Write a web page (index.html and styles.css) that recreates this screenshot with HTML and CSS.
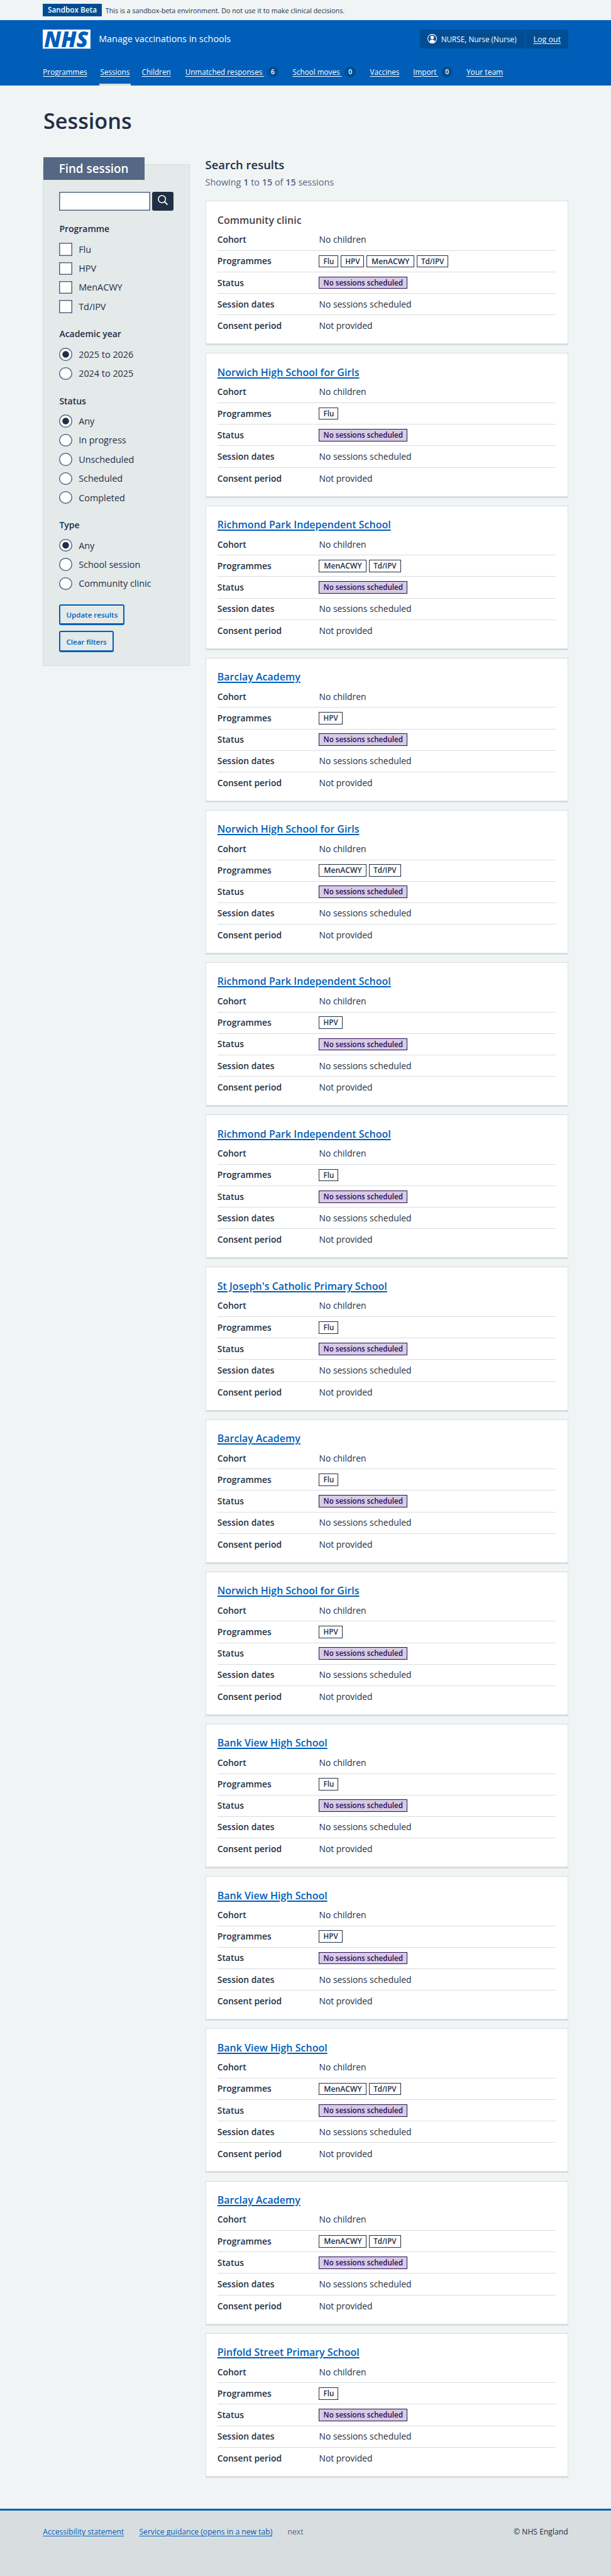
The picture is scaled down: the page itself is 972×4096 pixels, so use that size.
FILE: index.html
```html
<!DOCTYPE html>
<html lang="en">
<head>
<meta charset="utf-8">
<title>Sessions - Manage vaccinations in schools</title>
<link rel="stylesheet" href="styles.css">
</head>
<body>
<div class="banner wrap"><strong class="banner-tag">Sandbox Beta</strong><span class="banner-text">This is a sandbox-beta environment. Do not use it to make clinical decisions.</span></div>
<header class="header">
  <div class="wrap">
    <div class="header-row">
      <svg class="logo" viewBox="0 0 100 40" role="img" aria-label="NHS"><rect width="100" height="40" fill="#fff"/><text x="3" y="36.5" textLength="92" lengthAdjust="spacingAndGlyphs">NHS</text></svg>
      <span class="service">Manage vaccinations in schools</span>
      <div class="account">
        <span class="account-item"><svg class="user" viewBox="0 0 20 20"><circle cx="10" cy="10" r="9.2" fill="none" stroke="#fff" stroke-width="1.4"/><circle cx="10" cy="7.4" r="3.7" fill="#fff"/><path d="M4.8 17.6V15.2a3 3 0 0 1 3-3h4.4a3 3 0 0 1 3 3v2.4A9.3 9.3 0 0 1 10 19.4a9.3 9.3 0 0 1-5.200-1.800z" fill="#fff"/></svg>NURSE, Nurse (Nurse)</span>
        <span class="account-item logout"><a href="#">Log out</a></span>
      </div>
    </div>
    <nav class="nav">
      <span><a href="#">Programmes</a></span>
      <span><a href="#" class="current">Sessions</a></span>
      <span><a href="#">Children</a></span>
      <span><a href="#">Unmatched responses&nbsp;</a><b class="count">6</b></span>
      <span><a href="#">School moves&nbsp;</a><b class="count">0</b></span>
      <span><a href="#">Vaccines</a></span>
      <span><a href="#">Import&nbsp;</a><b class="count">0</b></span>
      <span><a href="#" class="team">Your team</a></span>
    </nav>
  </div>
</header>
<main class="main wrap">
  <h1>Sessions</h1>
  <div class="columns">
    <aside class="filters">
      <h2 class="filters-title">Find session</h2>
      <div class="search"><input type="text" aria-label="Search"><button class="search-button" aria-label="Search"><svg viewBox="0 0 20 20"><circle cx="8.400" cy="8.400" r="7.200" fill="none" stroke="#fff" stroke-width="2"/><path d="M13.600 13.600L18.700 18.700" stroke="#fff" stroke-width="2.500" stroke-linecap="round"/></svg></button></div>
      <h3>Programme</h3>
      <label><i class="box"></i>Flu</label>
      <label><i class="box"></i>HPV</label>
      <label><i class="box"></i>MenACWY</label>
      <label><i class="box"></i>Td/IPV</label>
      <h3>Academic year</h3>
      <label><i class="radio on"></i>2025 to 2026</label>
      <label><i class="radio"></i>2024 to 2025</label>
      <h3>Status</h3>
      <label><i class="radio on"></i>Any</label>
      <label><i class="radio"></i>In progress</label>
      <label><i class="radio"></i>Unscheduled</label>
      <label><i class="radio"></i>Scheduled</label>
      <label><i class="radio"></i>Completed</label>
      <h3>Type</h3>
      <label><i class="radio on"></i>Any</label>
      <label><i class="radio"></i>School session</label>
      <label><i class="radio"></i>Community clinic</label>
      <div class="actions"><button>Update results</button><button>Clear filters</button></div>
    </aside>
    <section class="results">
      <h2>Search results</h2>
      <p class="showing">Showing <b>1</b> to <b>15</b> of <b>15</b> sessions</p>
      <article class="card"><h3>Community clinic</h3><dl>
        <div><dt>Cohort</dt><dd>No children</dd></div>
        <div><dt>Programmes</dt><dd class="tags"><b>Flu</b><b>HPV</b><b class="wide">MenACWY</b><b>Td/IPV</b></dd></div>
        <div><dt>Status</dt><dd class="tags"><b class="status">No sessions scheduled</b></dd></div>
        <div><dt>Session dates</dt><dd>No sessions scheduled</dd></div>
        <div><dt>Consent period</dt><dd>Not provided</dd></div></dl></article>
      <article class="card"><h3><a href="#">Norwich High School for Girls</a></h3><dl>
        <div><dt>Cohort</dt><dd>No children</dd></div>
        <div><dt>Programmes</dt><dd class="tags"><b>Flu</b></dd></div>
        <div><dt>Status</dt><dd class="tags"><b class="status">No sessions scheduled</b></dd></div>
        <div><dt>Session dates</dt><dd>No sessions scheduled</dd></div>
        <div><dt>Consent period</dt><dd>Not provided</dd></div></dl></article>
      <article class="card"><h3><a href="#">Richmond Park Independent School</a></h3><dl>
        <div><dt>Cohort</dt><dd>No children</dd></div>
        <div><dt>Programmes</dt><dd class="tags"><b class="wide">MenACWY</b><b>Td/IPV</b></dd></div>
        <div><dt>Status</dt><dd class="tags"><b class="status">No sessions scheduled</b></dd></div>
        <div><dt>Session dates</dt><dd>No sessions scheduled</dd></div>
        <div><dt>Consent period</dt><dd>Not provided</dd></div></dl></article>
      <article class="card"><h3><a href="#">Barclay Academy</a></h3><dl>
        <div><dt>Cohort</dt><dd>No children</dd></div>
        <div><dt>Programmes</dt><dd class="tags"><b>HPV</b></dd></div>
        <div><dt>Status</dt><dd class="tags"><b class="status">No sessions scheduled</b></dd></div>
        <div><dt>Session dates</dt><dd>No sessions scheduled</dd></div>
        <div><dt>Consent period</dt><dd>Not provided</dd></div></dl></article>
      <article class="card"><h3><a href="#">Norwich High School for Girls</a></h3><dl>
        <div><dt>Cohort</dt><dd>No children</dd></div>
        <div><dt>Programmes</dt><dd class="tags"><b class="wide">MenACWY</b><b>Td/IPV</b></dd></div>
        <div><dt>Status</dt><dd class="tags"><b class="status">No sessions scheduled</b></dd></div>
        <div><dt>Session dates</dt><dd>No sessions scheduled</dd></div>
        <div><dt>Consent period</dt><dd>Not provided</dd></div></dl></article>
      <article class="card"><h3><a href="#">Richmond Park Independent School</a></h3><dl>
        <div><dt>Cohort</dt><dd>No children</dd></div>
        <div><dt>Programmes</dt><dd class="tags"><b>HPV</b></dd></div>
        <div><dt>Status</dt><dd class="tags"><b class="status">No sessions scheduled</b></dd></div>
        <div><dt>Session dates</dt><dd>No sessions scheduled</dd></div>
        <div><dt>Consent period</dt><dd>Not provided</dd></div></dl></article>
      <article class="card"><h3><a href="#">Richmond Park Independent School</a></h3><dl>
        <div><dt>Cohort</dt><dd>No children</dd></div>
        <div><dt>Programmes</dt><dd class="tags"><b>Flu</b></dd></div>
        <div><dt>Status</dt><dd class="tags"><b class="status">No sessions scheduled</b></dd></div>
        <div><dt>Session dates</dt><dd>No sessions scheduled</dd></div>
        <div><dt>Consent period</dt><dd>Not provided</dd></div></dl></article>
      <article class="card"><h3><a href="#">St Joseph's Catholic Primary School</a></h3><dl>
        <div><dt>Cohort</dt><dd>No children</dd></div>
        <div><dt>Programmes</dt><dd class="tags"><b>Flu</b></dd></div>
        <div><dt>Status</dt><dd class="tags"><b class="status">No sessions scheduled</b></dd></div>
        <div><dt>Session dates</dt><dd>No sessions scheduled</dd></div>
        <div><dt>Consent period</dt><dd>Not provided</dd></div></dl></article>
      <article class="card"><h3><a href="#">Barclay Academy</a></h3><dl>
        <div><dt>Cohort</dt><dd>No children</dd></div>
        <div><dt>Programmes</dt><dd class="tags"><b>Flu</b></dd></div>
        <div><dt>Status</dt><dd class="tags"><b class="status">No sessions scheduled</b></dd></div>
        <div><dt>Session dates</dt><dd>No sessions scheduled</dd></div>
        <div><dt>Consent period</dt><dd>Not provided</dd></div></dl></article>
      <article class="card"><h3><a href="#">Norwich High School for Girls</a></h3><dl>
        <div><dt>Cohort</dt><dd>No children</dd></div>
        <div><dt>Programmes</dt><dd class="tags"><b>HPV</b></dd></div>
        <div><dt>Status</dt><dd class="tags"><b class="status">No sessions scheduled</b></dd></div>
        <div><dt>Session dates</dt><dd>No sessions scheduled</dd></div>
        <div><dt>Consent period</dt><dd>Not provided</dd></div></dl></article>
      <article class="card"><h3><a href="#">Bank View High School</a></h3><dl>
        <div><dt>Cohort</dt><dd>No children</dd></div>
        <div><dt>Programmes</dt><dd class="tags"><b>Flu</b></dd></div>
        <div><dt>Status</dt><dd class="tags"><b class="status">No sessions scheduled</b></dd></div>
        <div><dt>Session dates</dt><dd>No sessions scheduled</dd></div>
        <div><dt>Consent period</dt><dd>Not provided</dd></div></dl></article>
      <article class="card"><h3><a href="#">Bank View High School</a></h3><dl>
        <div><dt>Cohort</dt><dd>No children</dd></div>
        <div><dt>Programmes</dt><dd class="tags"><b>HPV</b></dd></div>
        <div><dt>Status</dt><dd class="tags"><b class="status">No sessions scheduled</b></dd></div>
        <div><dt>Session dates</dt><dd>No sessions scheduled</dd></div>
        <div><dt>Consent period</dt><dd>Not provided</dd></div></dl></article>
      <article class="card"><h3><a href="#">Bank View High School</a></h3><dl>
        <div><dt>Cohort</dt><dd>No children</dd></div>
        <div><dt>Programmes</dt><dd class="tags"><b class="wide">MenACWY</b><b>Td/IPV</b></dd></div>
        <div><dt>Status</dt><dd class="tags"><b class="status">No sessions scheduled</b></dd></div>
        <div><dt>Session dates</dt><dd>No sessions scheduled</dd></div>
        <div><dt>Consent period</dt><dd>Not provided</dd></div></dl></article>
      <article class="card"><h3><a href="#">Barclay Academy</a></h3><dl>
        <div><dt>Cohort</dt><dd>No children</dd></div>
        <div><dt>Programmes</dt><dd class="tags"><b class="wide">MenACWY</b><b>Td/IPV</b></dd></div>
        <div><dt>Status</dt><dd class="tags"><b class="status">No sessions scheduled</b></dd></div>
        <div><dt>Session dates</dt><dd>No sessions scheduled</dd></div>
        <div><dt>Consent period</dt><dd>Not provided</dd></div></dl></article>
      <article class="card"><h3><a href="#">Pinfold Street Primary School</a></h3><dl>
        <div><dt>Cohort</dt><dd>No children</dd></div>
        <div><dt>Programmes</dt><dd class="tags"><b>Flu</b></dd></div>
        <div><dt>Status</dt><dd class="tags"><b class="status">No sessions scheduled</b></dd></div>
        <div><dt>Session dates</dt><dd>No sessions scheduled</dd></div>
        <div><dt>Consent period</dt><dd>Not provided</dd></div></dl></article>
    </section>
  </div>
</main>
<footer class="footer"><div class="wrap footer-row"><a href="#">Accessibility statement</a><a href="#">Service guidance (opens in a new tab)</a><span class="release">next</span><span class="copyright">© NHS England</span></div></footer>
</body>
</html>
```
FILE: styles.css
```css
/* 1rem is ten design units; the design is 128rem wide */
html { font-size: 7.59375px; background: #f0f4f5; }
* { box-sizing: border-box; }
body { margin: 0; font: 400 1.84rem/2.8rem "Open Sans", "Noto Sans", sans-serif; color: #212f44; }
h1, h2, h3, p, dl, dd { margin: 0; }
h1, h2, h3, b, dt, strong { font-weight: 600; }
button, input { font: inherit; }
.wrap { width: 110rem; margin: 0 auto; }

.banner { height: 4.2rem; display: flex; align-items: center; gap: .8rem; }
.banner-tag { width: 12.3rem; height: 2.6rem; background: #004d93; color: #fff; font-size: 1.55rem; line-height: 2.6rem; text-align: center; }
.banner-text { font-size: 1.418rem; padding-top: .1rem; }

.header { height: 13.7rem; padding-top: 2rem; background: #005eb8; color: #fff; }
.header a { color: #fff; text-underline-offset: .25rem; text-decoration-thickness: 1px; }
.header-row { display: flex; align-items: center; height: 4rem; }
.logo { width: 10rem; height: 4rem; overflow: visible; }
.logo text { font: italic 800 46px "Open Sans", sans-serif; fill: #005eb8; }
.service { margin-left: 1.7rem; padding-bottom: .15rem; font-size: 1.896rem; }
.account { display: flex; margin-left: auto; height: 4rem; border-radius: .4rem; background: #004d93; font-size: 1.55rem; }
.account-item { display: flex; align-items: center; width: 22rem; padding-left: 1.6rem; white-space: nowrap; }
.user { width: 2rem; height: 2rem; margin: -.2rem .8rem 0 0; }
.logout { width: 9rem; border-left: 1px solid #005eb8; font-size: 1.65rem; }
.nav { display: grid; grid-template-columns: 12rem 8.7rem 9.1rem 22.5rem 16.2rem 9.05rem 11.15rem 10rem; height: 7.7rem; padding-top: 2.1rem; font-size: 1.54rem; white-space: nowrap; }
.nav span { display: flex; align-items: center; }
.nav .current { align-self: stretch; display: flex; align-items: center; margin-left: -.2rem; padding: 0 .2rem; box-shadow: inset 0 -.4rem #d8dde0; }
.nav .team { font-size: 1.59rem; }
.count { width: 2.4rem; height: 2.3rem; margin-left: .6rem; border-radius: 50%; background: #004d93; font-size: 1.35rem; line-height: 2.3rem; text-align: center; }

.main { height: 507.4rem; padding-top: 4.6rem; }
h1 { height: 10.3rem; padding-left: .1rem; font-size: 4.5rem; line-height: 5.6rem; }
.columns { display: grid; grid-template-columns: 30.8rem 76rem; justify-content: space-between; align-items: start; }

.filters { height: 105rem; margin-top: 1.6rem; padding: 0 3.3rem; border: 1px solid #d8dde0; background: #e4e9e9; }
.filters-title { width: 21.2rem; height: 4.8rem; margin: -1.6rem 0 2.4rem -3.4rem; padding-left: 3.3rem; background: #546785; color: #fff; font-size: 2.48rem; line-height: 4.8rem; }
.search { display: flex; gap: .4rem; height: 4rem; }
.search input { width: 19rem; height: 4rem; padding: 0; border: 0; box-shadow: inset 0 0 0 .2rem #546785; border-radius: 0; background: #fff; }
.search-button { width: 4.8rem; padding: 0 0 .5rem; border: 0; border-radius: .4rem; background: #212f44; }
.search-button svg { display: block; width: 2.1rem; height: 2.1rem; margin: 0 auto; }
.filters h3 { margin: 2.39rem 0 .81rem; font-size: 1.84rem; }
.filters label { display: flex; align-items: center; height: 4rem; padding-top: .15rem; font-size: 1.9rem; }
.box, .radio { width: 2.7rem; height: 2.7rem; margin-right: 1.35rem; box-shadow: inset 0 0 0 .2rem #546785; background: #fff; }
.radio { border-radius: 50%; }
.on { background: radial-gradient(circle, #212f44 .64rem, #fff .74rem); }
.actions { display: flex; flex-direction: column; align-items: flex-start; gap: 1.2rem; margin-top: 2.4rem; }
.actions button { height: 4.4rem; padding: .2rem 1.2rem 0; border: .27rem solid #005eb8; border-bottom-width: .4rem; border-radius: .4rem; background: transparent; color: #005eb8; font-size: 1.52rem; font-weight: 600; }

.results h2 { height: 3.95rem; font-size: 2.43rem; line-height: 3.3rem; }
.showing { height: 5.3rem; color: #546785; font-size: 1.9rem; }
.card { height: 30.3rem; margin-bottom: 1.593rem; padding: 2.55rem 2.4rem 0; border: 1px solid #d8dde0; border-bottom-width: .4rem; background: #fff; }
.card h3 { height: 3.3rem; color: #4c4145; font-size: 2.11rem; }
.card a { color: #005eb8; text-decoration-thickness: .2rem; text-underline-offset: .3rem; }
.card dl div { display: grid; grid-template-columns: 21.3rem 1fr; align-items: center; height: 4.5rem; border-bottom: 1px solid #d8dde0; }
.card dl div:last-child { border-bottom: 0; }
.card dt, .card dd { padding-bottom: .1rem; font-size: 1.83rem; }
.card .tags { display: flex; gap: .5rem; padding: 0; }
.tags b { height: 2.6rem; padding: 0 .8rem; border: 1px solid #212f44; font-size: 1.53rem; line-height: 2.4rem; white-space: nowrap; }
.tags .wide { font-size: 1.6rem; padding: 0 .9rem; }
.tags .status { border-color: #2d0757; background: #d6cce3; color: #2d0757; }

.footer { height: 14.08rem; padding-top: 3.3rem; border-top: .4rem solid #005eb8; background: #d8dde0; font-size: 1.6rem; }
.footer-row { display: flex; gap: 3.2rem; line-height: 2.4rem; }
.footer a { color: #005eb8; text-underline-offset: .2rem; text-decoration-thickness: 1px; }
.release { color: #546785; }
.copyright { margin-left: auto; }
```
